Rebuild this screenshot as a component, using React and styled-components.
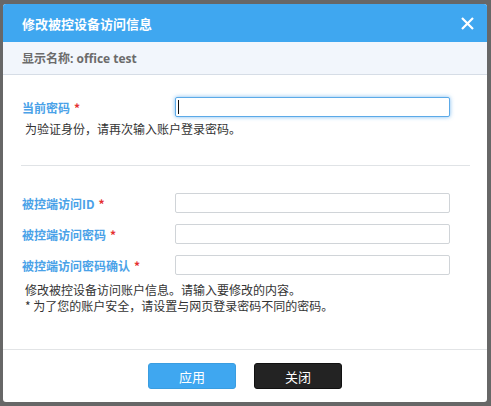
import React from 'react';
import styled, { createGlobalStyle } from 'styled-components';

const GlobalStyle = createGlobalStyle`
  html, body {
    margin: 0;
    padding: 0;
    background: #676767;
  }
  body {
    font-family: "Noto Sans CJK SC", "Noto Sans", sans-serif;
  }
`;

const Page = styled.div`
  padding: 4px 4px 4px 3px;
`;

const Dialog = styled.div`
  width: 484px;
  height: 398px;
  background: #fff;
  border-radius: 3px;
  overflow: hidden;
  display: flex;
  flex-direction: column;
`;

const Header = styled.div`
  height: 38px;
  background: #3fa7f0;
  display: flex;
  align-items: center;
  justify-content: space-between;
  padding: 0 10px 0 19px;
  flex-shrink: 0;
`;

const Title = styled.div`
  color: #fff;
  font-size: 13px;
  font-weight: bold;
`;

const CloseBtn = styled.button`
  width: 20px;
  height: 20px;
  padding: 0;
  border: none;
  background: transparent;
  display: flex;
  align-items: center;
  justify-content: center;
  cursor: pointer;
`;

const SubHeader = styled.div`
  height: 33px;
  box-sizing: border-box;
  background: #f2f6fc;
  border-bottom: 1px solid #d6dde6;
  display: flex;
  align-items: center;
  padding-left: 19px;
  color: #6b6b6b;
  font-family: "Open Sans", "Noto Sans CJK SC", sans-serif;
  font-size: 12px;
  font-weight: bold;
  flex-shrink: 0;
`;

const Body = styled.div`
  flex: 1;
  padding: 22px 17px 0 19px;
`;

const Row = styled.div`
  display: flex;
  align-items: center;
  height: 20px;
  margin-top: ${(p) => p.gap || 0}px;
`;

const Label = styled.div`
  width: 153px;
  color: #4aa2e8;
  font-size: 12px;
  font-weight: bold;
  white-space: nowrap;
`;

const Star = styled.span`
  color: #e53030;
  margin-left: 4px;
`;

const FieldWrap = styled.div`
  position: relative;
`;

const Input = styled.input`
  display: block;
  width: 275px;
  height: 20px;
  box-sizing: border-box;
  margin: 0;
  border: 1px solid ${(p) => (p.$focused ? '#5caae8' : '#d0d4d8')};
  border-radius: 2px;
  box-shadow: ${(p) => (p.$focused ? '0 0 4px rgba(70, 160, 235, 0.7)' : 'none')};
  outline: none;
  padding: 0 4px;
  font-size: 12px;
  background: #fff;
`;

const Caret = styled.span`
  position: absolute;
  left: 3px;
  top: 3px;
  width: 1px;
  height: 14px;
  background: #111;
`;

const Hint = styled.div`
  margin: ${(p) => p.top || 0}px 0 0 3px;
  font-size: 12px;
  line-height: 16px;
  color: #333;
`;

const Divider = styled.div`
  margin: 28px 0 0 -1px;
  width: 449px;
  border-top: 1px solid #e0e3e6;
`;

const Footer = styled.div`
  height: 53px;
  box-sizing: border-box;
  border-top: 1px solid #e2e4e6;
  display: flex;
  justify-content: center;
  gap: 18px;
  padding-top: 13px;
  flex-shrink: 0;
`;

const Button = styled.button`
  width: 88px;
  height: 26px;
  border-radius: 3px;
  border: 1px solid ${(p) => (p.$dark ? '#111' : '#3a9de0')};
  background: ${(p) => (p.$dark ? '#232323' : '#3fa7f0')};
  color: #fff;
  font-family: inherit;
  font-size: 13px;
  cursor: pointer;
  padding: 0;
`;

const fields = [
  { label: '被控端访问ID', gap: 27 },
  { label: '被控端访问密码', gap: 11 },
  { label: '被控端访问密码确认', gap: 11 },
];

export default function App() {
  return (
    <Page>
      <GlobalStyle />
      <Dialog>
        <Header>
          <Title>修改被控设备访问信息</Title>
          <CloseBtn aria-label="关闭">
            <svg width="13" height="13" viewBox="0 0 13 13">
              <path d="M1 1 L12 12 M12 1 L1 12" stroke="#fff" strokeWidth="2.2" />
            </svg>
          </CloseBtn>
        </Header>
        <SubHeader>显示名称: office test</SubHeader>
        <Body>
          <Row>
            <Label>
              当前密码<Star>*</Star>
            </Label>
            <FieldWrap>
              <Input type="password" $focused />
              <Caret />
            </FieldWrap>
          </Row>
          <Hint top={4}>为验证身份，请再次输入账户登录密码。</Hint>
          <Divider />
          {fields.map((f) => (
            <Row key={f.label} gap={f.gap}>
              <Label>
                {f.label}
                <Star>*</Star>
              </Label>
              <Input type="text" />
            </Row>
          ))}
          <Hint top={7}>
            修改被控设备访问账户信息。请输入要修改的内容。
            <br />* 为了您的账户安全，请设置与网页登录密码不同的密码。
          </Hint>
        </Body>
        <Footer>
          <Button>应用</Button>
          <Button $dark>关闭</Button>
        </Footer>
      </Dialog>
    </Page>
  );
}
